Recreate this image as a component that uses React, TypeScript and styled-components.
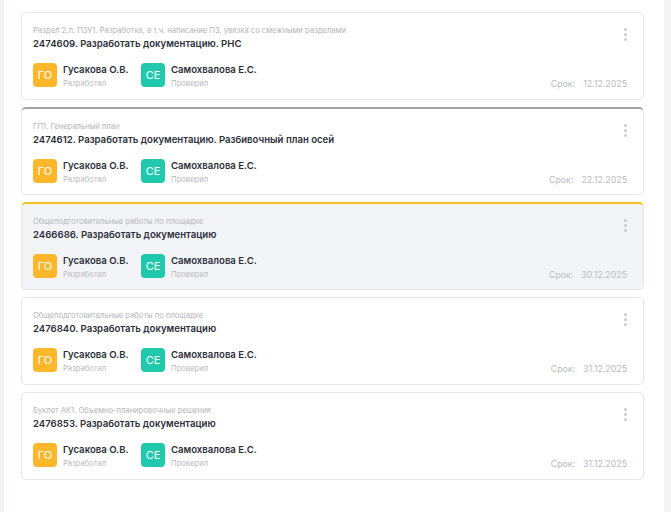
import React from 'react';
import styled, { createGlobalStyle } from 'styled-components';

const GlobalStyle = createGlobalStyle`
  html, body {
    margin: 0;
    padding: 0;
    background: #fff;
    font-family: Inter, 'Noto Sans', sans-serif;
  }
`;

type Task = {
  section: string;
  title: string;
  deadline: string;
  accent?: 'gray' | 'yellow';
  active?: boolean;
};

const tasks: Task[] = [
  {
    section: 'Раздел 2.п. ПЗУ1. Разработка, в т.ч. написание ПЗ, увязка со смежными разделами',
    title: '2474609. Разработать документацию. РНС',
    deadline: '12.12.2025',
  },
  {
    section: 'ГП1. Генеральный план',
    title: '2474612. Разработать документацию. Разбивочный план осей',
    deadline: '22.12.2025',
    accent: 'gray',
  },
  {
    section: 'Общеподготовительные работы по площадке',
    title: '2466686. Разработать документацию',
    deadline: '30.12.2025',
    accent: 'yellow',
    active: true,
  },
  {
    section: 'Общеподготовительные работы по площадке',
    title: '2476840. Разработать документацию',
    deadline: '31.12.2025',
  },
  {
    section: 'Буклет АК1. Объемно-планировочные решения',
    title: '2476853. Разработать документацию',
    deadline: '31.12.2025',
  },
];

const Page = styled.div`
  display: flex;
  min-height: 512px;
`;

const SideStrip = styled.div<{ $w: number }>`
  width: ${(p) => p.$w}px;
  flex-shrink: 0;
  background: #f3f4f8;
`;

const Main = styled.div`
  flex: 1;
  display: flex;
  flex-direction: column;
  gap: 7px;
  padding: 12px 20px 0 17px;
`;

const Card = styled.div<{ $accent?: 'gray' | 'yellow'; $active?: boolean }>`
  position: relative;
  height: 88px;
  box-sizing: border-box;
  display: flex;
  flex-direction: column;
  padding: 12px 16px 0 11px;
  border: 1px solid #e4e5e9;
  border-top: ${(p) =>
    p.$accent === 'yellow'
      ? '2px solid #f6c21c'
      : p.$accent === 'gray'
      ? '2px solid #a3a3a6'
      : '1px solid #e4e5e9'};
  border-radius: 5px;
  background: ${(p) => (p.$active ? '#f3f4f8' : '#fff')};
`;

const Section = styled.div`
  font-size: 7.6px;
  line-height: 12px;
  color: #b4b5b9;
  white-space: nowrap;
`;

const Title = styled.div`
  font-size: 9.6px;
  line-height: 13px;
  font-weight: 600;
  color: #2d3039;
`;

const Bottom = styled.div`
  display: flex;
  align-items: flex-start;
  margin-top: 13px;
`;

const People = styled.div`
  display: flex;
  gap: 0;
`;

const Person = styled.div`
  display: flex;
  align-items: flex-start;
  width: 108px;
`;

const Avatar = styled.div<{ $color: string }>`
  width: 24px;
  height: 24px;
  border-radius: 4px;
  background: ${(p) => p.$color};
  color: #fff;
  font-size: 11px;
  display: flex;
  align-items: center;
  justify-content: center;
  flex-shrink: 0;
`;

const PersonText = styled.div`
  display: flex;
  flex-direction: column;
  margin-left: 6px;
`;

const Name = styled.div`
  font-size: 9.6px;
  line-height: 13px;
  font-weight: 600;
  color: #2d3039;
  white-space: nowrap;
`;

const Role = styled.div`
  font-size: 7.6px;
  line-height: 11px;
  margin-top: 2px;
  color: #b9babe;
`;

const Deadline = styled.div`
  margin-left: auto;
  margin-top: 15px;
  font-size: 8.8px;
  line-height: 11px;
  color: #b9babe;
  display: flex;
  gap: 8px;
`;

const Menu = styled.div`
  position: absolute;
  top: 15px;
  right: 16px;
  display: flex;
  flex-direction: column;
  gap: 2px;
`;

const Dot = styled.span`
  width: 3px;
  height: 3px;
  border-radius: 50%;
  background: #c7c8cc;
`;

const App = () => {
  return (
    <Page>
      <GlobalStyle />
      <SideStrip $w={4} />
      <Main>
        {tasks.map((task, index) => (
          <Card key={index} $accent={task.accent} $active={task.active}>
            <Section>{task.section}</Section>
            <Title>{task.title}</Title>
            <Bottom>
              <People>
                <Person>
                  <Avatar $color="#fdb72a">ГО</Avatar>
                  <PersonText>
                    <Name>Гусакова О.В.</Name>
                    <Role>Разработал</Role>
                  </PersonText>
                </Person>
                <Person>
                  <Avatar $color="#20c9ad">СЕ</Avatar>
                  <PersonText>
                    <Name>Самохвалова Е.С.</Name>
                    <Role>Проверил</Role>
                  </PersonText>
                </Person>
              </People>
              <Deadline>
                <span>Срок:</span>
                <span>{task.deadline}</span>
              </Deadline>
            </Bottom>
            <Menu>
              <Dot />
              <Dot />
              <Dot />
            </Menu>
          </Card>
        ))}
      </Main>
      <SideStrip $w={7} />
    </Page>
  );
};

export default App;
